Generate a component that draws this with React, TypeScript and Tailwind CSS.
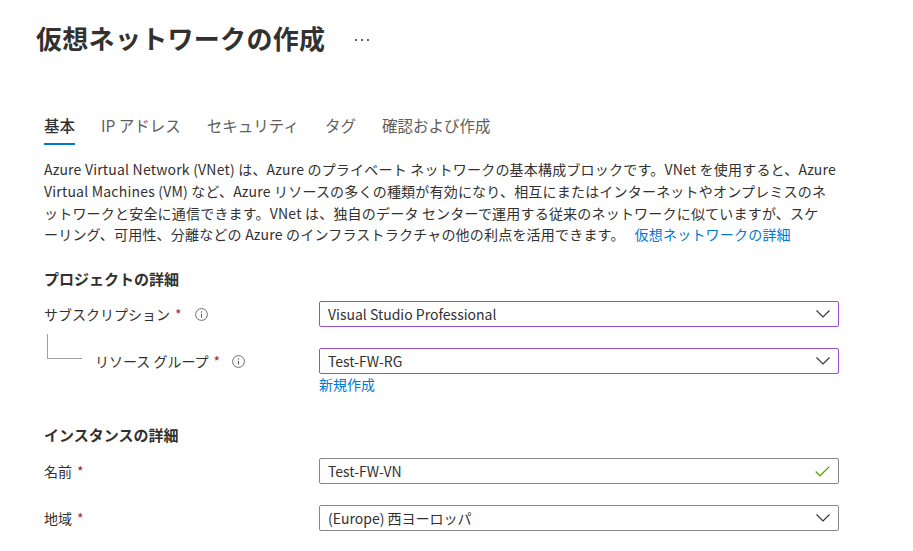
import React from 'react';

const Chevron = () => (
  <svg width="14" height="8" viewBox="0 0 14 8" fill="none">
    <path d="M0.5 0.5 L7 7 L13.5 0.5" stroke="#323130" strokeWidth="1.1" />
  </svg>
);

const Check = () => (
  <svg width="15" height="11" viewBox="0 0 15 11" fill="none">
    <path d="M0.7 5.5 L5 9.8 L14.3 0.6" stroke="#57a300" strokeWidth="1.2" />
  </svg>
);

const InfoIcon = () => (
  <svg width="13" height="13" viewBox="0 0 13 13" fill="none">
    <circle cx="6.5" cy="6.5" r="5.9" stroke="#605e5c" strokeWidth="0.9" />
    <circle cx="6.5" cy="4" r="0.7" fill="#605e5c" />
    <path d="M6.5 5.8 V9.6" stroke="#605e5c" strokeWidth="1" />
  </svg>
);

function Required() {
  return <span className="text-[#a4262c] ml-[5px]">*</span>;
}

function Field({ value, tone, icon }: { value: string; tone: 'purple' | 'gray'; icon: 'chevron' | 'check' }) {
  return (
    <div
      className={`w-[520px] h-[26px] rounded-[2px] border flex items-center justify-between pl-[8px] pr-[8px] text-[14px] text-[#323130] ${
        tone === 'purple' ? 'border-[#9e4fc6]' : 'border-[#8a8886]'
      }`}
    >
      <span className="leading-[20px]">{value}</span>
      {icon === 'chevron' ? <Chevron /> : <Check />}
    </div>
  );
}

const tabs = ['基本', 'IP アドレス', 'セキュリティ', 'タグ', '確認および作成'];

export default function App() {
  return (
    <div className="w-[913px] h-[551px] overflow-hidden bg-white text-[#323130] font-['Noto_Sans_CJK_JP',sans-serif]">
      {/* Header */}
      <div className="pl-[36px] pt-[20px] flex items-center">
        <h1 className="text-[26px] leading-[36px] font-semibold tracking-[0.3px]">仮想ネットワークの作成</h1>
        <div className="ml-[30px] mt-[3px] flex gap-[4px]">
          <span className="w-[2px] h-[2px] rounded-full bg-[#323130]" />
          <span className="w-[2px] h-[2px] rounded-full bg-[#323130]" />
          <span className="w-[2px] h-[2px] rounded-full bg-[#323130]" />
        </div>
      </div>

      <div className="pl-[44px]">
        {/* Tabs */}
        <div className="mt-[58px] flex gap-[26px]">
          {tabs.map((t, i) => (
            <div key={t} className="flex flex-col">
              <span className={`text-[15.5px] leading-[22px] ${i === 0 ? 'text-[#323130] font-medium' : 'text-[#605e5c]'}`}>{t}</span>
              <span className={`mt-[7px] h-[2px] ${i === 0 ? 'bg-[#0078d4]' : 'bg-transparent'}`} />
            </div>
          ))}
        </div>

        {/* Description */}
        <div className="mt-[14px] text-[14px] leading-[21.75px] tracking-[0.2px] text-[#323130] whitespace-nowrap">
          <div>Azure Virtual Network (VNet) は、Azure のプライベート ネットワークの基本構成ブロックです。VNet を使用すると、Azure</div>
          <div>Virtual Machines (VM) など、Azure リソースの多くの種類が有効になり、相互にまたはインターネットやオンプレミスのネ</div>
          <div>ットワークと安全に通信できます。VNet は、独自のデータ センターで運用する従来のネットワークに似ていますが、スケ</div>
          <div>
            ーリング、可用性、分離などの Azure のインフラストラクチャの他の利点を活用できます。
            <a className="ml-[10px] text-[#0078d4]">仮想ネットワークの詳細</a>
          </div>
        </div>

        {/* Project details */}
        <h2 className="mt-[22px] text-[15px] leading-[22px] font-semibold">プロジェクトの詳細</h2>

        <div className="mt-[11px] flex items-center">
          <div className="w-[275px] flex items-center text-[14px]">
            <span>サブスクリプション</span>
            <Required />
            <span className="ml-[13px] flex"><InfoIcon /></span>
          </div>
          <Field value="Visual Studio Professional" tone="purple" icon="chevron" />
        </div>

        <div className="mt-[21px] flex items-start">
          <div className="w-[275px] h-[26px] flex items-center text-[14px]">
            <div className="self-start -mt-[14px] ml-[3px] w-[35px] h-[25px] border-l border-b border-[#a19f9d]" />
            <span className="ml-[13px]">リソース グループ</span>
            <Required />
            <span className="ml-[12px] flex"><InfoIcon /></span>
          </div>
          <div className="flex flex-col">
            <Field value="Test-FW-RG" tone="purple" icon="chevron" />
            <a className="text-[14px] leading-[20px] text-[#0078d4]">新規作成</a>
          </div>
        </div>

        {/* Instance details */}
        <h2 className="mt-[30px] text-[15px] leading-[22px] font-semibold">インスタンスの詳細</h2>

        <div className="mt-[12px] flex items-center">
          <div className="w-[275px] flex items-center text-[14px]">
            <span>名前</span>
            <Required />
          </div>
          <Field value="Test-FW-VN" tone="gray" icon="check" />
        </div>

        <div className="mt-[21px] flex items-center">
          <div className="w-[275px] flex items-center text-[14px]">
            <span>地域</span>
            <Required />
          </div>
          <Field value="(Europe) 西ヨーロッパ" tone="gray" icon="chevron" />
        </div>
      </div>
    </div>
  );
}
